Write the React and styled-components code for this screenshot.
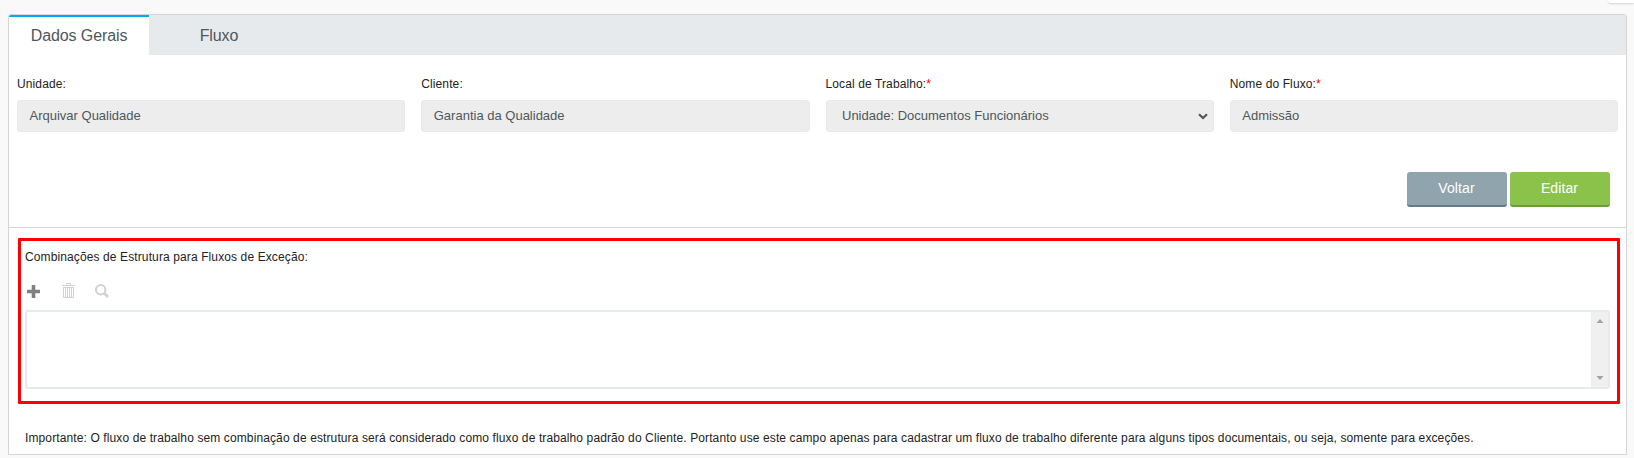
import React from "react";
import styled, { createGlobalStyle } from "styled-components";

const GlobalStyle = createGlobalStyle`
  * { box-sizing: border-box; }
  body {
    margin: 0;
    background: #f9f9f9;
    color: #222;
    font: 12px/16px "Liberation Sans", Arial, sans-serif;
    letter-spacing: 0.113px;
    overflow: hidden;
  }
`;

const Page = styled.div`
  height: 458px;
  padding-right: 7px;
  padding-left: 8px;
`;

const TopStrip = styled.div`
  display: flex;
  justify-content: flex-end;
  height: 14px;
  margin-right: -7px;
`;

const TopCard = styled.div`
  width: 26px;
  height: 3px;
  background: #fff;
  border-bottom-left-radius: 3px;
  box-shadow: 0 1px 2px rgba(0, 0, 0, 0.15);
`;

const Panel = styled.main`
  height: 441px;
  background: #fff;
  border: 1px solid #d6d4d4;
  border-radius: 3px 3px 0 0;
`;

const TabBar = styled.nav`
  display: flex;
  height: 40px;
  background: #e6eaed;
`;

const Tab = styled.button`
  width: 140px;
  padding: 0;
  border: 0;
  border-top: 2px solid ${(p) => (p.$active ? "#03a9f4" : "transparent")};
  border-top-left-radius: ${(p) => (p.$active ? "2px" : "0")};
  background: ${(p) => (p.$active ? "#fff" : "transparent")};
  color: #4e575c;
  font: 16px/38px "Liberation Sans", Arial, sans-serif;
  letter-spacing: -0.1px;
`;

const Fields = styled.section`
  display: grid;
  grid-template-columns: repeat(4, 1fr);
  gap: 16px;
  padding: 21px 8px 0;
`;

const Field = styled.label`
  display: flex;
  flex-direction: column;
  gap: 8px;
`;

const Required = styled.span`
  color: #f00;
`;

const Value = styled.div`
  display: flex;
  align-items: center;
  justify-content: space-between;
  height: 32px;
  padding: 0 5px 0 ${(p) => (p.$select ? "15.5px" : "11.5px")};
  background: #ededed;
  border: 1px solid #e6eaed;
  border-radius: 3px;
  color: #4e575c;
  font-size: 13px;
  letter-spacing: 0;
`;

const Actions = styled.div`
  display: flex;
  justify-content: flex-end;
  gap: 3px;
  padding: 40px 16px 20px;
  border-bottom: 1px solid #d6d4d4;
`;

const Button = styled.button`
  width: 100px;
  height: 35px;
  padding: 0 1px 1px 0;
  border: 0;
  border-bottom: 2px solid ${(p) => (p.$primary ? "#689f38" : "#607d8b")};
  border-radius: 3px;
  background: ${(p) => (p.$primary ? "#8bc34a" : "#90a4ae")};
  color: #fff;
  font: 14px/32px "Liberation Sans", Arial, sans-serif;
  letter-spacing: 0.1px;
`;

const Exceptions = styled.section`
  height: 166px;
  margin: 10px 6px 0 9px;
  padding: 8px 7px 0 4px;
  border: 3px solid #f00;
  border-radius: 1px;
`;

const Toolbar = styled.div`
  display: flex;
  align-items: flex-end;
  gap: 20px;
  height: 33px;
  padding-left: 2px;
`;

const ListBox = styled.div`
  display: flex;
  justify-content: flex-end;
  height: 79px;
  margin-top: 12px;
  border: 2px solid #e6eaed;
  border-radius: 3px;
`;

const ScrollTrack = styled.div`
  display: flex;
  flex-direction: column;
  justify-content: space-between;
  align-items: center;
  width: 17px;
  padding: 7px 0;
  background: #f0f0f0;
`;

const Note = styled.p`
  margin: 26px 16px 0;
  white-space: nowrap;
`;

const Chevron = () => (
  <svg width="10" height="7" viewBox="0 0 10 7">
    <path d="M1 1.2 L5 5 L9 1.2" fill="none" stroke="#4e575c" strokeWidth="2.2" />
  </svg>
);

const PlusIcon = () => (
  <svg width="13" height="13" viewBox="0 0 13 13" fill="#808080">
    <path d="M4.7 0h3.6v4.7H13v3.6H8.3V13H4.7V8.3H0V4.7h4.7z" />
  </svg>
);

const TrashIcon = () => (
  <svg width="15" height="15" viewBox="-2 0 15 15" fill="none" stroke="#d1d1d1">
    <path d="M0 2.5h13M4.5 2V.5h4V2M1 4.5h11M1.5 4v10.5h10V4M3.5 5v9M5.5 5v9M7.5 5v9M9.5 5v9" />
  </svg>
);

const SearchIcon = () => (
  <svg width="14" height="14" viewBox="0 0 14 14" fill="none" stroke="#d1d1d1">
    <circle cx="5.7" cy="5.7" r="4.7" strokeWidth="2" />
    <path d="M9 9l4 4" strokeWidth="2.6" />
  </svg>
);

const ScrollArrow = ({ down }) => (
  <svg width="8" height="4" viewBox="0 0 8 4" fill="#a3a3a3">
    <path d={down ? "M.5 0h7L4 4z" : "M.5 4h7L4 0z"} />
  </svg>
);

const fields = [
  { label: "Unidade:", value: "Arquivar Qualidade" },
  { label: "Cliente:", value: "Garantia da Qualidade" },
  { label: "Local de Trabalho:", value: "Unidade: Documentos Funcionários", required: true, select: true },
  { label: "Nome do Fluxo:", value: "Admissão", required: true },
];

export default function App() {
  return (
    <Page>
      <GlobalStyle />
      <TopStrip>
        <TopCard />
      </TopStrip>
      <Panel>
        <TabBar>
          <Tab $active>Dados Gerais</Tab>
          <Tab>Fluxo</Tab>
        </TabBar>
        <Fields>
          {fields.map((f) => (
            <Field key={f.label}>
              <span>
                {f.label}
                {f.required && <Required>*</Required>}
              </span>
              <Value $select={f.select}>
                <span>{f.value}</span>
                {f.select && <Chevron />}
              </Value>
            </Field>
          ))}
        </Fields>
        <Actions>
          <Button>Voltar</Button>
          <Button $primary>Editar</Button>
        </Actions>
        <Exceptions>
          <div>Combinações de Estrutura para Fluxos de Exceção:</div>
          <Toolbar>
            <PlusIcon />
            <TrashIcon />
            <SearchIcon />
          </Toolbar>
          <ListBox>
            <ScrollTrack>
              <ScrollArrow />
              <ScrollArrow down />
            </ScrollTrack>
          </ListBox>
        </Exceptions>
        <Note>
          Importante: O fluxo de trabalho sem combinação de estrutura será considerado como fluxo de trabalho padrão do
          Cliente. Portanto use este campo apenas para cadastrar um fluxo de trabalho diferente para alguns tipos
          documentais, ou seja, somente para exceções.
        </Note>
      </Panel>
    </Page>
  );
}
